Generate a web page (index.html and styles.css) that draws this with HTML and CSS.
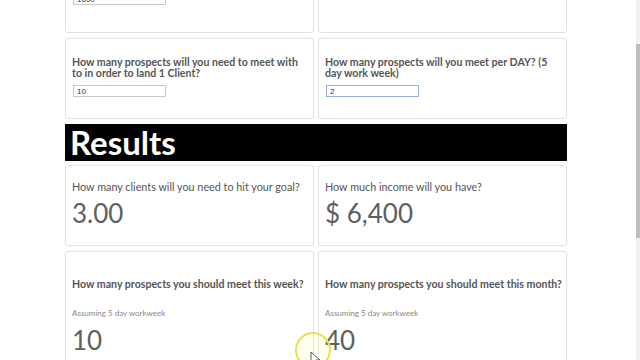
FILE: index.html
```html
<!DOCTYPE html>
<html lang="en">
<head>
    <meta charset="UTF-8">
    <meta name="viewport" content="width=device-width, initial-scale=1.0">
    <title>Prospect Calculator</title>
    <link rel="stylesheet" href="styles.css">
</head>
<body>
    <div class="page">
        <div class="row">
            <div class="card card-top">
                <label class="question">What is your average sale amount?</label>
                <input class="field" type="text" value="1600">
            </div>
            <div class="card card-top">
                <label class="question">&nbsp;</label>
            </div>
        </div>

        <div class="row">
            <div class="card">
                <label class="question">How many prospects will you need to meet with to in order to land 1 Client?</label>
                <input class="field" type="text" value="10">
            </div>
            <div class="card">
                <label class="question">How many prospects will you meet per DAY? (5 day work week)</label>
                <input class="field focus" type="text" value="2">
            </div>
        </div>

        <h1 class="results-title">Results</h1>

        <div class="row">
            <div class="card result">
                <p class="result-label">How many clients will you need to hit your goal?</p>
                <div class="result-value">3.00</div>
            </div>
            <div class="card result">
                <p class="result-label">How much income will you have?</p>
                <div class="result-value">$ 6,400</div>
            </div>
        </div>

        <div class="row">
            <div class="card result result-wide">
                <p class="question">How many prospects you should meet this week?</p>
                <p class="note">Assuming 5 day workweek</p>
                <div class="result-value">10</div>
            </div>
            <div class="card result result-wide">
                <p class="question">How many prospects you should meet this month?</p>
                <p class="note">Assuming 5 day workweek</p>
                <div class="result-value">40</div>
            </div>
        </div>
    </div>

    <div class="scrollbar"><div class="thumb"></div></div>

    <svg class="cursor" width="60" height="60" viewBox="0 0 60 60">
        <circle cx="30" cy="28" r="17" fill="rgba(255,255,120,0.12)" stroke="#e6e24a" stroke-width="2"/>
        <path d="M28 30 L28 42 L31 39 L33 44 L35 43 L33 38 L37 38 Z" fill="#fff" stroke="#333" stroke-width="0.8"/>
    </svg>
</body>
</html>
```

FILE: styles.css
```css
* {
    margin: 0;
    padding: 0;
    box-sizing: border-box;
}

body {
    font-family: Lato, 'Open Sans', sans-serif;
    background: #fff;
    color: #555;
    overflow: hidden;
    height: 360px;
}

.page {
    width: 502px;
    margin-left: 65px;
    margin-top: -43px;
}

.row {
    display: grid;
    grid-template-columns: 1fr 1fr;
    gap: 4px;
    margin-bottom: 5px;
}

.card {
    background: #fff;
    border: 1px solid #e3e3e3;
    border-radius: 3px;
    box-shadow: 0 0 2px rgba(0, 0, 0, 0.06);
    padding: 18px 4px 21px 6px;
}

.card-top {
    padding-bottom: 27px;
}

.question {
    display: block;
    font-size: 10.6px;
    font-weight: bold;
    line-height: 11px;
    color: #555;
    margin-bottom: 6px;
}

.field {
    display: block;
    width: 93px;
    height: 12px;
    margin-left: 1px;
    border: 1px solid #c8c8c8;
    font-family: 'Liberation Sans', Arial, sans-serif;
    font-size: 8px;
    padding: 0 3px;
    color: #333;
    background: #fff;
}

.field.focus {
    border-color: #8fb0dc;
}

.results-title {
    background: #000;
    color: #fff;
    font-size: 33px;
    font-weight: bold;
    height: 37px;
    line-height: 37px;
    padding-left: 5px;
    margin-bottom: 4px;
}

.result {
    padding: 14px 4px 18px 6px;
}

.result-label {
    font-size: 10.8px;
    line-height: 14px;
    color: #555;
}

.result-value {
    font-size: 26px;
    line-height: 28px;
    margin-top: 5px;
    color: #5f5f5f;
}

.result-wide {
    padding-top: 27px;
    height: 120px;
}

.result-wide .question {
    margin-bottom: 18px;
}

.result-wide .result-value {
    margin-top: 0;
}

.note {
    font-size: 8px;
    color: #888;
    line-height: 10px;
    margin-bottom: 8px;
}

.scrollbar {
    position: fixed;
    top: 0;
    right: 0;
    width: 4px;
    height: 360px;
    background: #f1f1f1;
}

.thumb {
    margin-top: 44px;
    height: 194px;
    background: #bcbcbc;
}

.cursor {
    position: fixed;
    left: 283px;
    top: 322px;
}
```
